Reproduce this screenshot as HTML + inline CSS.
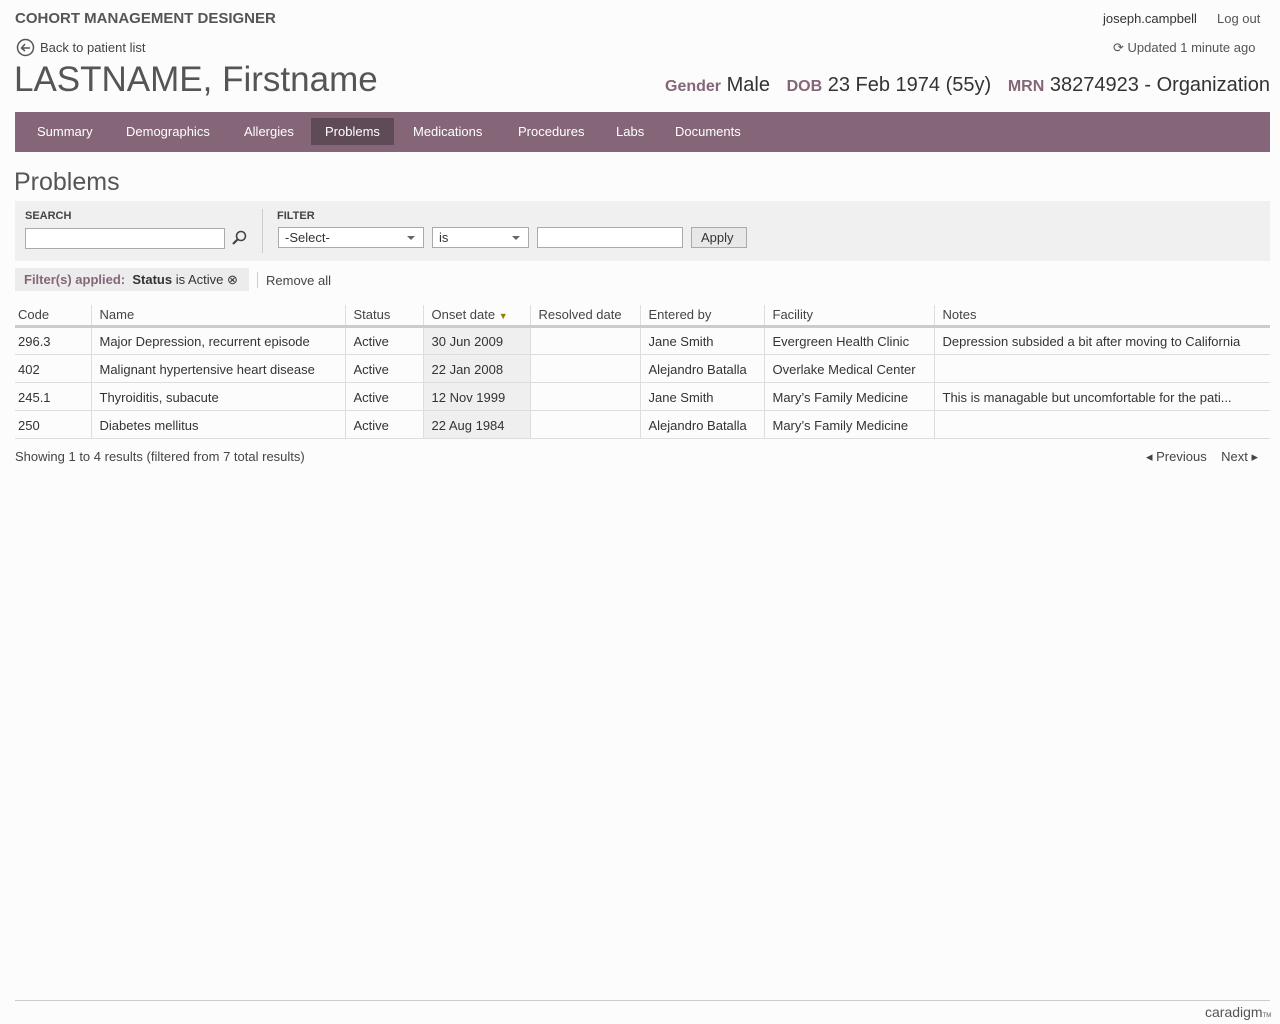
<!DOCTYPE html>
<html><head><meta charset="utf-8"><style>
*{margin:0;padding:0;box-sizing:border-box}
body{width:1280px;height:1024px;background:#fcfcfc;font-family:"Liberation Sans",sans-serif;color:#333;position:relative;overflow:hidden;font-size:13px}
.a{position:absolute;white-space:nowrap}
.nav{position:absolute;left:15px;top:112px;width:1255px;height:40px;background:#856678}
.nav span{position:absolute;top:6px;height:27px;line-height:27px;color:#fff;font-size:13px;padding:0 14px}
.fb{position:absolute;left:15px;top:201px;width:1255px;height:60px;background:#f0f0f0}
.in{position:absolute;height:21px;border:1px solid #aaa;background:#fff;font-size:13px;line-height:19px;padding-left:6px}
.dd:after{content:"";position:absolute;right:8px;top:8px;border:4px solid transparent;border-top:4px solid #666}
table{position:absolute;left:15px;top:305px;width:1255px;border-collapse:collapse;font-size:13px}
th{font-weight:normal;text-align:left;height:21px;padding:0 0 0 8px;border-left:1px solid #ddd;border-bottom:3px solid #ccc;color:#444}
td{height:28px;padding:2px 0 0 8px;border-left:1px solid #ddd;border-bottom:1px solid #ddd;white-space:nowrap;overflow:hidden}
th:first-child,td:first-child{border-left:none;padding-left:3px}
.on{background:#efefef}
</style></head><body>
<div class="a" style="left:15px;top:10px;font-size:15px;font-weight:bold;color:#555">COHORT MANAGEMENT DESIGNER</div>
<div class="a" style="left:1103px;top:11px;font-size:13px">joseph.campbell</div>
<div class="a" style="left:1217px;top:11px;font-size:13px;color:#555">Log out</div>
<svg class="a" style="left:16px;top:38px" width="19" height="19" viewBox="0 0 19 19"><circle cx="9.5" cy="9.5" r="8" fill="none" stroke="#555" stroke-width="1.5"/><path d="M14 10H6M9 6L5.5 10 9 13" fill="none" stroke="#555" stroke-width="1.5"/></svg>
<div class="a" style="left:40px;top:40px;font-size:13px;color:#444">Back to patient list</div>
<div class="a" style="left:1113px;top:40px;font-size:13px;color:#555">⟳ Updated 1 minute ago</div>
<div class="a" style="left:14px;top:60px;font-size:35px;color:#555">LASTNAME, Firstname</div>
<div class="a" style="right:10px;top:74px;font-size:20px;color:#333"><b style="color:#856678;font-size:16px">Gender</b> Male &nbsp; <b style="color:#856678;font-size:16px">DOB</b> 23 Feb 1974 (55y) &nbsp; <b style="color:#856678;font-size:16px">MRN</b> 38274923 - Organization</div>
<div class="nav">
<span style="left:8px">Summary</span><span style="left:97px">Demographics</span><span style="left:215px">Allergies</span><span style="left:296px;background:#5f4a57">Problems</span><span style="left:384px">Medications</span><span style="left:489px">Procedures</span><span style="left:587px">Labs</span><span style="left:646px">Documents</span>
</div>
<div class="a" style="left:14px;top:168px;font-size:25px;color:#555">Problems</div>
<div class="fb">
<div class="a" style="left:10px;top:9px;font-size:11px;font-weight:bold;color:#444">SEARCH</div>
<div class="in" style="left:10px;top:27px;width:200px"></div>
<svg class="a" style="left:216px;top:29px" width="16" height="16" viewBox="0 0 16 16"><circle cx="10" cy="6" r="4.5" fill="none" stroke="#444" stroke-width="1.6"/><path d="M7 9L2 14" stroke="#444" stroke-width="2.2"/></svg>
<div class="a" style="left:247px;top:8px;width:1px;height:44px;background:#ccc"></div>
<div class="a" style="left:262px;top:9px;font-size:11px;font-weight:bold;color:#444">FILTER</div>
<div class="in dd" style="left:263px;top:26px;width:146px">-Select-</div>
<div class="in dd" style="left:417px;top:26px;width:97px">is</div>
<div class="in" style="left:522px;top:26px;width:146px"></div>
<div class="in" style="left:676px;top:26px;width:56px;background:#e8e8e8;padding-left:9px">Apply</div>
</div>
<div class="a" style="left:15px;top:268px;width:234px;height:23px;background:#ececec"></div>
<div class="a" style="left:24px;top:272px;font-size:13px"><b style="color:#856678">Filter(s) applied:</b>&nbsp; <b>Status</b> is Active ⊗</div>
<div class="a" style="left:257px;top:272px;width:1px;height:16px;background:#ccc"></div>
<div class="a" style="left:266px;top:273px;font-size:13px;color:#444">Remove all</div>
<table>
<tr><th style="width:76px">Code</th><th style="width:254px">Name</th><th style="width:78px">Status</th><th style="width:107px">Onset date <span style="color:#880;font-size:9px">▼</span></th><th style="width:110px">Resolved date</th><th style="width:124px">Entered by</th><th style="width:170px">Facility</th><th>Notes</th></tr>
<tr><td>296.3</td><td>Major Depression, recurrent episode</td><td>Active</td><td class="on">30 Jun 2009</td><td></td><td>Jane Smith</td><td>Evergreen Health Clinic</td><td>Depression subsided a bit after moving to California</td></tr>
<tr><td>402</td><td>Malignant hypertensive heart disease</td><td>Active</td><td class="on">22 Jan 2008</td><td></td><td>Alejandro Batalla</td><td>Overlake Medical Center</td><td></td></tr>
<tr><td>245.1</td><td>Thyroiditis, subacute</td><td>Active</td><td class="on">12 Nov 1999</td><td></td><td>Jane Smith</td><td>Mary’s Family Medicine</td><td>This is managable but uncomfortable for the pati...</td></tr>
<tr><td>250</td><td>Diabetes mellitus</td><td>Active</td><td class="on">22 Aug 1984</td><td></td><td>Alejandro Batalla</td><td>Mary’s Family Medicine</td><td></td></tr>
</table>
<div class="a" style="left:15px;top:449px;font-size:13px;color:#444">Showing 1 to 4 results (filtered from 7 total results)</div>
<div class="a" style="left:1146px;top:449px;font-size:13px;color:#444">◂ Previous &nbsp;&nbsp; Next ▸</div>
<div class="a" style="left:15px;top:1000px;width:1255px;height:1px;background:#ccc"></div>
<div class="a" style="left:1205px;top:1004px;font-size:14px;color:#555">caradigm<span style="font-size:6px">TM</span></div>
</body></html>
